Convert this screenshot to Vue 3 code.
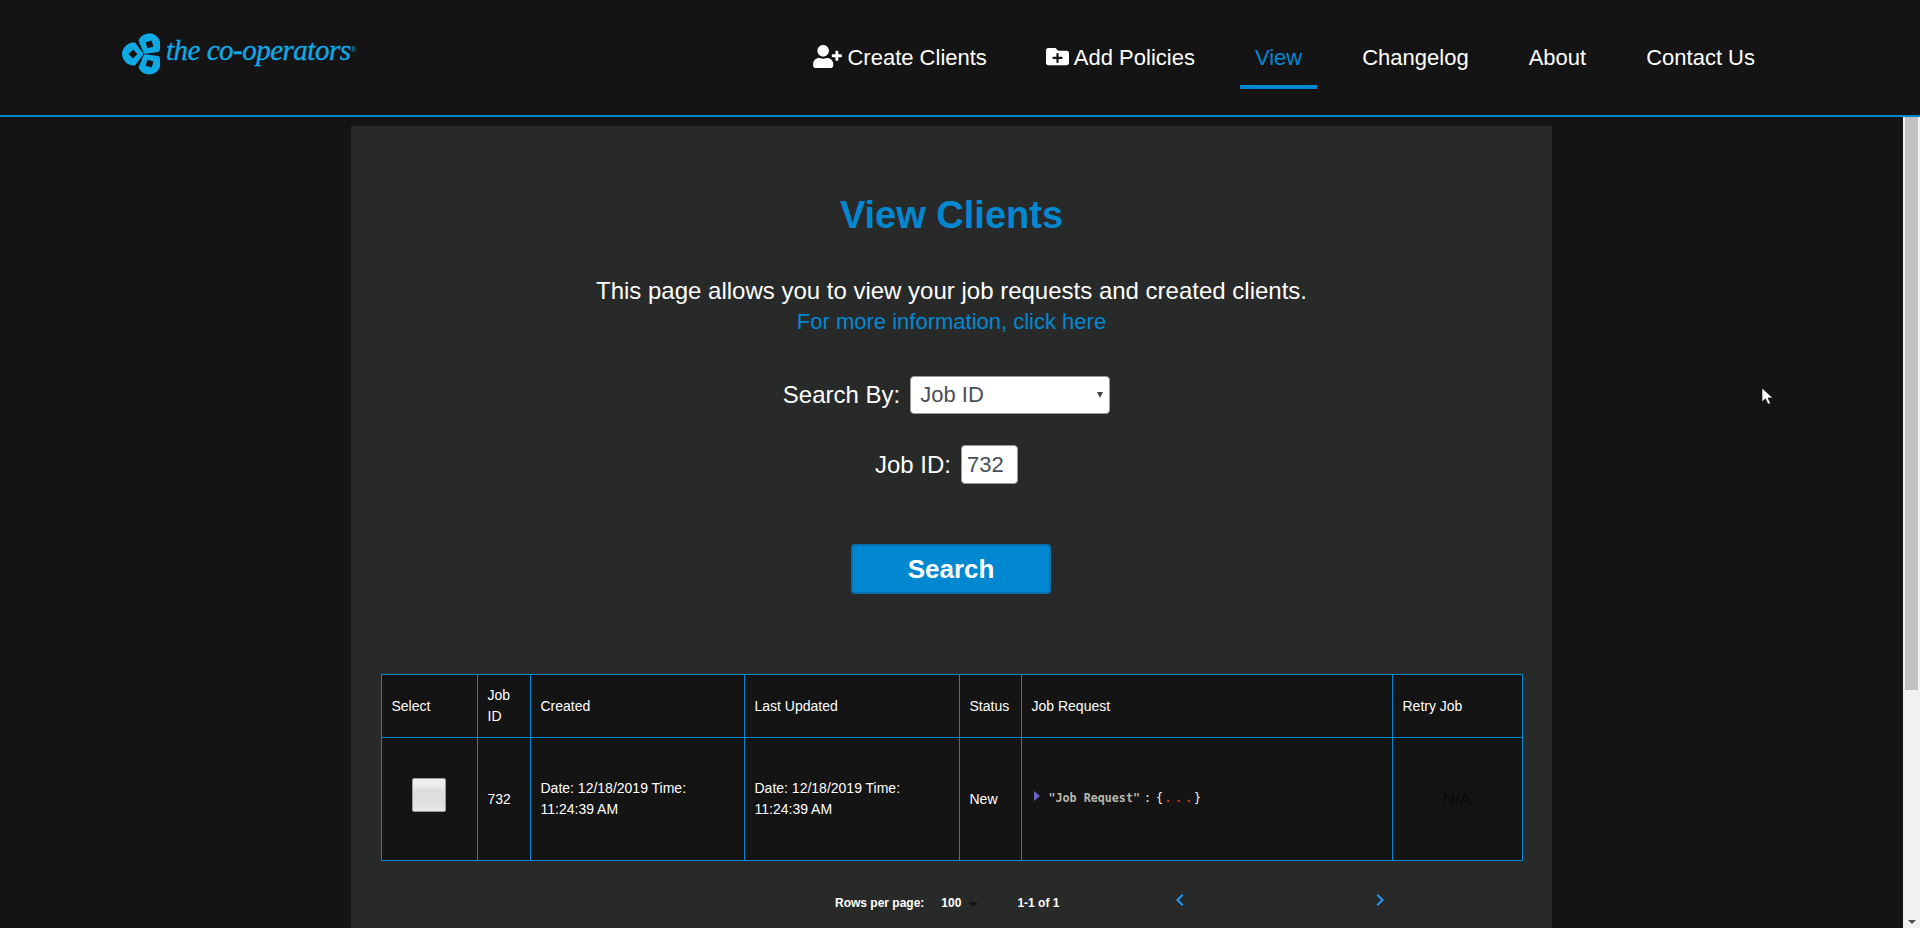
<template>
    <div class="page">
        <header class="topbar">
            <a class="logo">
                <svg class="logo-mark" viewBox="-22 -21 38 42" width="38" height="42">
                    <path
                        v-for="angle in logoAngles"
                        :key="angle"
                        :transform="`rotate(${angle})`"
                        fill="#0fa9e6"
                        fill-rule="evenodd"
                        d="M-0.800 -0.800 L-9 -11.500 C-16 -12.500 -22 -6 -22 0 C-22 6 -16 12.500 -9 11.500 L-0.800 0.800 Z M-11 -4.500 L-15.500 0 L-11 4.500 L-6.500 0 Z"
                    />
                </svg>
                <span class="logo-text">the co-operators</span>
                <span class="logo-reg">®</span>
            </a>
            <nav class="nav">
                <a class="nav-link">
                    <svg class="nav-icon" viewBox="0 0 640 512" width="29" height="23">
                        <path fill="#fff" d="M624 208h-64v-64c0-8.800-7.200-16-16-16h-32c-8.800 0-16 7.200-16 16v64h-64c-8.800 0-16 7.200-16 16v32c0 8.800 7.200 16 16 16h64v64c0 8.800 7.200 16 16 16h32c8.800 0 16-7.200 16-16v-64h64c8.800 0 16-7.200 16-16v-32c0-8.800-7.200-16-16-16zm-400 48c70.700 0 128-57.300 128-128S294.700 0 224 0 96 57.300 96 128s57.300 128 128 128zm89.600 32h-16.700c-22.200 10.200-46.900 16-72.900 16s-50.600-5.800-72.900-16h-16.700C60.200 288 0 348.200 0 422.400V464c0 26.500 21.500 48 48 48h352c26.500 0 48-21.500 48-48v-41.600c0-74.200-60.200-134.400-134.400-134.400z" />
                    </svg>
                    <span>Create Clients</span>
                </a>
                <a class="nav-link">
                    <svg class="nav-icon folder" viewBox="0 0 512 512" width="23" height="23">
                        <path fill="#fff" d="M464 128H272l-54.630-54.630c-6-6-14.140-9.370-22.630-9.370H48C21.490 64 0 85.490 0 112v288c0 26.510 21.490 48 48 48h416c26.510 0 48-21.490 48-48V176c0-26.510-21.490-48-48-48zm-96 168c0 8.840-7.160 16-16 16h-72v72c0 8.840-7.160 16-16 16h-16c-8.840 0-16-7.160-16-16v-72h-72c-8.840 0-16-7.160-16-16v-16c0-8.840 7.160-16 16-16h72v-72c0-8.840 7.160-16 16-16h16c8.840 0 16 7.160 16 16v72h72c8.840 0 16 7.160 16 16v16z" />
                    </svg>
                    <span>Add Policies</span>
                </a>
                <a class="nav-link active">View</a>
                <a class="nav-link">Changelog</a>
                <a class="nav-link">About</a>
                <a class="nav-link">Contact Us</a>
            </nav>
        </header>

        <div class="body-row">
            <main class="main">
                <section class="panel">
                    <h1 class="title">View Clients</h1>
                    <p class="intro">This page allows you to view your job requests and created clients.</p>
                    <a class="more-link">For more information, click here</a>

                    <div class="field select-field">
                        <label>Search By:</label>
                        <div class="fake-select">
                            <span>Job ID</span>
                            <i class="select-caret"></i>
                        </div>
                    </div>
                    <div class="field id-field">
                        <label>Job ID:</label>
                        <input class="id-input" type="text" value="732" />
                    </div>

                    <button class="search-btn">Search</button>

                    <table class="jobs">
                        <colgroup>
                            <col v-for="w in colWidths" :key="w" :style="{ width: w + 'px' }" />
                        </colgroup>
                        <thead>
                            <tr>
                                <th v-for="h in headers" :key="h">{{ h }}</th>
                            </tr>
                        </thead>
                        <tbody>
                            <tr>
                                <td class="center"><span class="checkbox"></span></td>
                                <td>{{ job.id }}</td>
                                <td>Date: {{ job.date }} Time: {{ job.time }}</td>
                                <td>Date: {{ job.date }} Time: {{ job.time }}</td>
                                <td>{{ job.status }}</td>
                                <td>
                                    <div class="json">
                                        <i class="json-arrow"></i>
                                        <span class="json-key">"Job Request"</span>
                                        <span class="json-colon">:</span>
                                        <span class="json-brace">{<b>...</b>}</span>
                                    </div>
                                </td>
                                <td class="center na">N/A</td>
                            </tr>
                        </tbody>
                    </table>

                    <div class="pager">
                        <span class="pager-label">Rows per page:</span>
                        <span class="pager-size">100<i class="pager-caret"></i></span>
                        <span class="pager-range">1-1 of 1</span>
                        <svg class="pager-prev" viewBox="0 0 24 24" width="24" height="24">
                            <path fill="#2196f3" d="M15.410 7.410 14 6l-6 6 6 6 1.410-1.410L10.830 12z" />
                        </svg>
                        <svg class="pager-next" viewBox="0 0 24 24" width="24" height="24">
                            <path fill="#2196f3" d="M10 6 8.590 7.410 13.170 12l-4.580 4.590L10 18l6-6z" />
                        </svg>
                    </div>
                </section>
            </main>
            <div class="scrollbar">
                <div class="scroll-thumb"></div>
                <i class="scroll-down"></i>
            </div>
        </div>

        <svg class="cursor" viewBox="0 0 12 18" width="12" height="18">
            <path fill="#fff" stroke="#000" stroke-width="0.6" d="M1 1v14l3.500-3.200 2.500 5.500 2.500-1.100-2.500-5.300h4.800z" />
        </svg>
    </div>
</template>

<script setup>
const logoAngles = [0, 120, 240];
const headers = ['Select', 'Job ID', 'Created', 'Last Updated', 'Status', 'Job Request', 'Retry Job'];
const colWidths = [96, 53, 214, 215, 62, 371, 130];

const job = {
    id: 732,
    date: '12/18/2019',
    time: '11:24:39 AM',
    status: 'New'
};
</script>

<style>
html, body {
    margin: 0;
    height: 100%;
    overflow: hidden;
    background: #141414;
}
</style>

<style scoped>
.page {
    position: relative;
    height: 928px;
    overflow: hidden;
    display: flex;
    flex-direction: column;
    background: #141414;
    color: #fff;
    font-family: "Liberation Sans", Arial, sans-serif;
}

.topbar {
    flex-shrink: 0;
    height: 115px;
    border-bottom: 2px solid #0288d1;
    display: flex;
    justify-content: space-between;
    padding: 0 150px 0 122px;
}

.logo {
    display: flex;
    align-items: flex-start;
    padding-top: 33px;
}

.logo-mark {
    flex-shrink: 0;
}

.logo-text {
    margin: -1px 0 0 6px;
    font-family: "Liberation Serif", serif;
    font-style: italic;
    font-size: 29px;
    -webkit-text-stroke: 0.35px #0fa9e6;
    letter-spacing: -0.5px;
    line-height: 36px;
    color: #0fa9e6;
}

.logo-reg {
    font-size: 8px;
    line-height: 34px;
    color: #0fa9e6;
}

.nav {
    display: flex;
    gap: 30px;
    padding-top: 45px;
    height: 44px;
}

.nav-link {
    display: flex;
    align-items: flex-start;
    box-sizing: border-box;
    height: 44px;
    padding: 0 15px;
    font-size: 22px;
    line-height: 26px;
    color: #fff;
    white-space: pre;
}

.nav-link:first-child {
    margin-right: -1px;
}

.nav-icon {
    margin-right: 5px;
}

.nav-link.active {
    color: #0288d1;
    border-bottom: 4px solid #0288d1;
}

.body-row {
    flex: 1;
    display: flex;
    min-height: 0;
}

.main {
    flex: 1;
    padding-top: 9px;
    display: flex;
    justify-content: center;
}

.panel {
    width: 1201px;
    box-sizing: border-box;
    padding: 0 30px;
    background: #282a2a;
    text-align: center;
    display: flex;
    flex-direction: column;
    align-items: center;
}

.panel > * {
    flex-shrink: 0;
}

.title {
    margin: 65px 0 0;
    font-size: 38px;
    line-height: 48px;
    font-weight: bold;
    color: #0288d1;
}

.intro {
    margin: 37px 0 0;
    font-size: 24px;
    line-height: 30px;
}

.more-link {
    font-size: 22px;
    line-height: 31px;
    color: #0288d1;
}

.field {
    display: flex;
    align-items: center;
    justify-content: center;
    padding-right: 10px;
    font-size: 24px;
}

.select-field {
    margin-top: 39px;
}

.id-field {
    margin-top: 31px;
}

.field label {
    margin-right: 10px;
}

.fake-select {
    position: relative;
    width: 200px;
    height: 38px;
    box-sizing: border-box;
    padding-left: 9px;
    background: #fff;
    border: 1px solid #9a9a9a;
    border-radius: 4px;
    color: #495057;
    font-size: 22px;
    line-height: 36px;
    text-align: left;
}

.select-caret {
    position: absolute;
    right: 6px;
    top: 15px;
    border-left: 3px solid transparent;
    border-right: 3px solid transparent;
    border-top: 6px solid #444;
}

.id-input {
    width: 57px;
    height: 39px;
    box-sizing: border-box;
    padding: 0 5px;
    background: #fff;
    border: 1px solid #9a9a9a;
    border-radius: 4px;
    color: #495057;
    font: 22px "Liberation Sans", Arial, sans-serif;
}

.search-btn {
    margin: 60px 1px 0 0;
    width: 200px;
    height: 50px;
    background: #0288d1;
    border: 2px solid #0270ad;
    border-radius: 4px;
    color: #fff;
    font: bold 26px "Liberation Sans", Arial, sans-serif;
}

.jobs {
    margin-top: 80px;
    width: 1141px;
    table-layout: fixed;
    border-collapse: collapse;
    background: #141414;
    font-size: 14px;
    line-height: 21px;
    text-align: left;
}

.jobs th,
.jobs td {
    border: 1px solid #0288d1;
    padding: 0 10px;
    font-weight: normal;
}

.jobs thead tr {
    height: 63px;
}

.jobs tbody tr {
    height: 123px;
}

.center {
    text-align: center;
}

.checkbox {
    display: inline-block;
    width: 34px;
    height: 34px;
    box-sizing: border-box;
    margin-bottom: 8px;
    border: 1px solid #9b9b9b;
    border-radius: 2px;
    background: linear-gradient(#f0f0f0, #ececec 22%, #dedede 32%, #dedede 70%, #e8e8e8);
    vertical-align: middle;
}

.json {
    display: flex;
    align-items: center;
    margin-bottom: 3px;
    font-family: "DejaVu Sans Mono", monospace;
    font-size: 11.700px;
    line-height: 16px;
    white-space: pre;
}

.json-arrow {
    width: 0;
    height: 0;
    margin: -3px 9px 0 2px;
    border-top: 5px solid transparent;
    border-bottom: 5px solid transparent;
    border-left: 6px solid #6f63c9;
}

.json-key {
    color: #b8b8ac;
    font-weight: bold;
}

.json-colon {
    margin: 0 5px 0 4px;
    color: #f8f8f2;
}

.json-brace {
    color: #f8f8f2;
}

.json-brace b {
    margin: 0 -1.500px 0 1.500px;
    color: #c4441d;
    letter-spacing: 3.300px;
}

.na {
    color: #0a0a0a;
    font-size: 17px;
}

.pager {
    position: relative;
    align-self: stretch;
    height: 60px;
    display: flex;
    align-items: flex-start;
    padding: 34px 0 0 454px;
    font-size: 12px;
    line-height: 16px;
    font-weight: bold;
}

.pager-size {
    margin-left: 17px;
    display: flex;
    align-items: center;
}

.pager-caret {
    margin-left: 7px;
    margin-top: 2px;
    border-left: 5px solid transparent;
    border-right: 5px solid transparent;
    border-top: 5px solid #141414;
}

.pager-range {
    margin-left: 39px;
}

.pager-prev {
    margin: -7px 0 0 109px;
}

.pager-next {
    margin: -7px 0 0 176px;
}

.scrollbar {
    position: relative;
    width: 17px;
    flex-shrink: 0;
    background: #f1f1f1;
}

.scroll-thumb {
    width: 13px;
    height: 573px;
    margin-left: 2px;
    background: #c1c1c1;
}

.scroll-down {
    position: absolute;
    left: 5px;
    bottom: 4px;
    border-left: 4px solid transparent;
    border-right: 4px solid transparent;
    border-top: 4px solid #505050;
}

.cursor {
    position: absolute;
    left: 1761px;
    top: 387px;
}
</style>
